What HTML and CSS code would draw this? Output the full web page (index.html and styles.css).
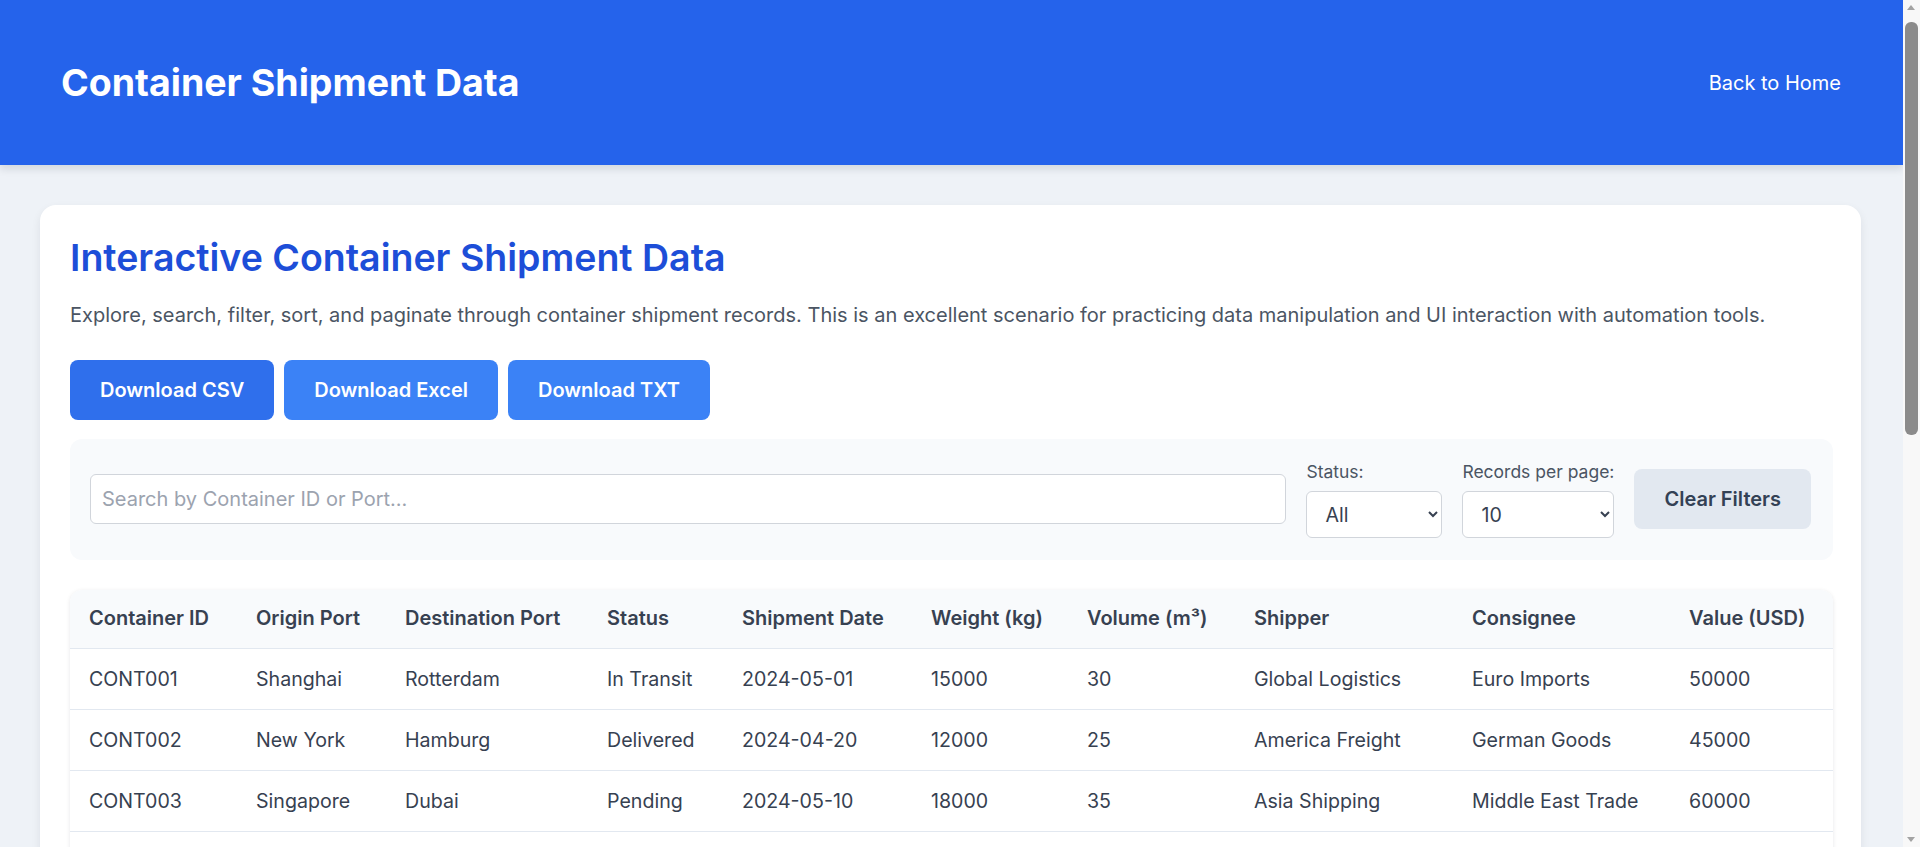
FILE: index.html
```html
<!DOCTYPE html>
<html lang="en">
<head>
<meta charset="utf-8">
<title>Container Shipment Data</title>
<link rel="stylesheet" href="styles.css">
</head>
<body>
<header class="topbar">
  <h1 class="brand">Container Shipment Data</h1>
  <a class="home-link" href="#">Back to Home</a>
</header>
<main class="page">
  <section class="card">
    <h2 class="card-title">Interactive Container Shipment Data</h2>
    <p class="lead">Explore, search, filter, sort, and paginate through container shipment records. This is an excellent scenario for practicing data manipulation and UI interaction with automation tools.</p>
    <div class="downloads">
      <button class="btn btn-primary btn-active">Download CSV</button>
      <button class="btn btn-primary">Download Excel</button>
      <button class="btn btn-primary">Download TXT</button>
    </div>
    <div class="filters">
      <input class="search" type="text" placeholder="Search by Container ID or Port...">
      <label class="field field-status">
        <span class="field-label">Status:</span>
        <select class="select">
          <option>All</option>
          <option>In Transit</option>
          <option>Delivered</option>
          <option>Pending</option>
        </select>
      </label>
      <label class="field field-records">
        <span class="field-label">Records per page:</span>
        <select class="select">
          <option>10</option>
          <option>25</option>
          <option>50</option>
        </select>
      </label>
      <button class="btn btn-muted">Clear Filters</button>
    </div>
    <div class="table-wrap">
      <table class="data">
        <colgroup>
          <col class="c-id"><col class="c-origin"><col class="c-dest"><col class="c-status"><col class="c-date"><col class="c-weight"><col class="c-volume"><col class="c-shipper"><col class="c-consignee"><col class="c-value">
        </colgroup>
        <thead>
          <tr>
            <th>Container ID</th><th>Origin Port</th><th>Destination Port</th><th>Status</th><th>Shipment Date</th><th>Weight (kg)</th><th>Volume (m³)</th><th>Shipper</th><th>Consignee</th><th>Value (USD)</th>
          </tr>
        </thead>
        <tbody>
          <tr><td>CONT001</td><td>Shanghai</td><td>Rotterdam</td><td>In Transit</td><td>2024-05-01</td><td>15000</td><td>30</td><td>Global Logistics</td><td>Euro Imports</td><td>50000</td></tr>
          <tr><td>CONT002</td><td>New York</td><td>Hamburg</td><td>Delivered</td><td>2024-04-20</td><td>12000</td><td>25</td><td>America Freight</td><td>German Goods</td><td>45000</td></tr>
          <tr><td>CONT003</td><td>Singapore</td><td>Dubai</td><td>Pending</td><td>2024-05-10</td><td>18000</td><td>35</td><td>Asia Shipping</td><td>Middle East Trade</td><td>60000</td></tr>
          <tr><td>CONT004</td><td>Los Angeles</td><td>Tokyo</td><td>In Transit</td><td>2024-05-05</td><td>16000</td><td>32</td><td>Pacific Lines</td><td>Japan Traders</td><td>55000</td></tr>
          <tr><td>CONT005</td><td>Rotterdam</td><td>New York</td><td>Delivered</td><td>2024-04-15</td><td>14000</td><td>28</td><td>Euro Exports</td><td>US Retail</td><td>48000</td></tr>
          <tr><td>CONT006</td><td>Busan</td><td>Sydney</td><td>Pending</td><td>2024-05-12</td><td>17000</td><td>33</td><td>Korea Cargo</td><td>Aussie Imports</td><td>58000</td></tr>
          <tr><td>CONT007</td><td>Hamburg</td><td>Santos</td><td>In Transit</td><td>2024-05-03</td><td>13000</td><td>27</td><td>Nordic Freight</td><td>Brazil Goods</td><td>47000</td></tr>
          <tr><td>CONT008</td><td>Dubai</td><td>Mumbai</td><td>Delivered</td><td>2024-04-25</td><td>11000</td><td>22</td><td>Gulf Shipping</td><td>India Traders</td><td>40000</td></tr>
          <tr><td>CONT009</td><td>Antwerp</td><td>Montreal</td><td>Pending</td><td>2024-05-14</td><td>19000</td><td>38</td><td>Benelux Lines</td><td>Canada Supply</td><td>62000</td></tr>
          <tr><td>CONT010</td><td>Hong Kong</td><td>Vancouver</td><td>In Transit</td><td>2024-05-07</td><td>15500</td><td>31</td><td>China Ocean</td><td>West Coast Retail</td><td>52000</td></tr>
        </tbody>
      </table>
    </div>
  </section>
</main>
<div class="scrollbar" aria-hidden="true">
  <div class="sb-arrow sb-up"></div>
  <div class="sb-track"><div class="sb-thumb"></div></div>
  <div class="sb-arrow sb-down"></div>
</div>
</body>
</html>
```

FILE: styles.css
```css
* { box-sizing: border-box; }

html, body {
  margin: 0;
  padding: 0;
}

body {
  margin-right: 17px;
  background: #eef2f7;
  font-family: Inter, "Noto Sans", "Liberation Sans", sans-serif;
  color: #374151;
}

.topbar {
  height: 165px;
  background: #2563eb;
  display: flex;
  align-items: center;
  justify-content: space-between;
  padding: 0 62px 0 61px;
  box-shadow: 0 4px 8px rgba(15, 23, 42, 0.12);
}

.brand {
  margin: 0;
  color: #ffffff;
  font-size: 37.5px;
  line-height: 40px;
  font-weight: 700;
}

.home-link {
  color: #ffffff;
  font-size: 20px;
  line-height: 28px;
  text-decoration: none;
}

.page {
  padding: 40px 42px 40px 40px;
}

.card {
  background: #ffffff;
  border-radius: 16px;
  padding: 33px 28px 30px 30px;
  box-shadow: 0 4px 10px rgba(15, 23, 42, 0.08);
}

.card-title {
  margin: 0 0 23px 0;
  color: #1d4ed8;
  font-size: 37.5px;
  line-height: 40px;
  font-weight: 600;
}

.lead {
  margin: 0 0 31px 0;
  color: #4b5563;
  font-size: 20px;
  line-height: 28px;
}

.downloads {
  display: flex;
  gap: 10px;
  margin-bottom: 19px;
}

.btn {
  font-family: inherit;
  font-size: 20px;
  line-height: 28px;
  font-weight: 600;
  border: 0;
  border-radius: 8px;
  padding: 16px 30px;
  cursor: pointer;
}

.btn-primary {
  background: #3b82f6;
  color: #ffffff;
}

.btn-active {
  background: #2f6fec;
}

.btn-muted {
  background: #e2e8f0;
  color: #334155;
}

.filters {
  display: flex;
  align-items: center;
  gap: 20px;
  background: #f8fafc;
  border-radius: 12px;
  padding: 20px 22px 22px 20px;
  margin-bottom: 30px;
}

.search {
  flex: 1;
  height: 50px;
  border: 1px solid #d1d5db;
  border-radius: 6px;
  padding: 0 11px;
  font-family: inherit;
  font-size: 20px;
  color: #374151;
  background: #ffffff;
}

.search::placeholder {
  color: #9ca3af;
}

.field {
  display: flex;
  flex-direction: column;
  gap: 6px;
}

.field-label {
  font-size: 17.5px;
  line-height: 26px;
  color: #4b5563;
}

.field-status { width: 136px; }
.field-records { width: 152px; }

.select {
  height: 47px;
  border: 1px solid #d1d5db;
  border-radius: 6px;
  padding: 0 8px 0 14px;
  font-family: inherit;
  font-size: 19.6px;
  color: #374151;
  background: #ffffff;
  width: 100%;
}

.table-wrap {
  border-radius: 12px;
  overflow: hidden;
  box-shadow: 0 1px 4px rgba(15, 23, 42, 0.1);
}

.data {
  width: 100%;
  table-layout: fixed;
  border-collapse: collapse;
  font-size: 19.6px;
  line-height: 28px;
}

.c-id { width: 167px; }
.c-origin { width: 149px; }
.c-dest { width: 202px; }
.c-status { width: 135px; }
.c-date { width: 189px; }
.c-weight { width: 156px; }
.c-volume { width: 167px; }
.c-shipper { width: 218px; }
.c-consignee { width: 217px; }
.c-value { width: auto; }

.data th {
  text-align: left;
  font-size: 20px;
  font-weight: 600;
  color: #374151;
  background: #f8fafc;
  padding: 14px 10px 16px 19px;
  border-bottom: 1px solid #e2e8f0;
  white-space: nowrap;
}

.data td {
  padding: 16px 10px 16px 19px;
  color: #374151;
  border-bottom: 1px solid #e2e8f0;
  white-space: nowrap;
}

.scrollbar {
  position: fixed;
  top: 0;
  right: 0;
  width: 17px;
  height: 100vh;
  background: #f8f8f8;
  display: flex;
  flex-direction: column;
}

.sb-arrow {
  height: 17px;
  position: relative;
}

.sb-up::after,
.sb-down::after {
  content: "";
  position: absolute;
  left: 4px;
  border-left: 4.5px solid transparent;
  border-right: 4.5px solid transparent;
}

.sb-up::after {
  top: 5px;
  border-bottom: 5px solid #a3a3a3;
}

.sb-down::after {
  bottom: 5px;
  border-top: 5px solid #a3a3a3;
}

.sb-track {
  flex: 1;
  padding: 5px 2px 0 2px;
}

.sb-thumb {
  height: 413px;
  background: #8b8b8b;
  border-radius: 6px;
}
```
